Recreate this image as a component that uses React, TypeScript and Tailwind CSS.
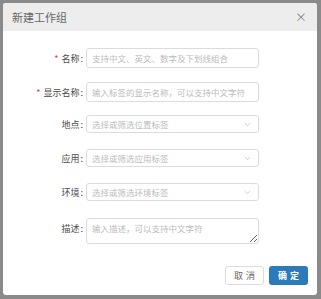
import { ChevronDown } from "lucide-react";

const font = { fontFamily: '"Noto Sans CJK SC", "Noto Sans", sans-serif' };

function Label({ text, required }: { text: string; required?: boolean }) {
  return (
    <div className="w-[83px] shrink-0 text-right pr-[3px] text-[9px] text-[#4a4a4a] leading-none">
      {required && <span className="text-[#e53935] mr-[3px]">*</span>}
      {text}<span className="ml-[1px]">:</span>
    </div>
  );
}

function TextInput({ placeholder }: { placeholder: string }) {
  return (
    <input
      placeholder={placeholder}
      className="w-[173px] h-[20px] border border-[#dcdcdc] rounded-[3px] px-[5px] text-[8.5px] text-[#333] placeholder:text-[#bbbbbb] outline-none"
    />
  );
}

function SelectBox({ placeholder }: { placeholder: string }) {
  return (
    <div className="w-[173px] h-[18px] border border-[#dcdcdc] rounded-[3px] pl-[5px] pr-[6px] flex items-center justify-between">
      <span className="text-[8.5px] text-[#bbbbbb] leading-none">{placeholder}</span>
      <ChevronDown size={9} strokeWidth={1.5} className="text-[#aaaaaa]" />
    </div>
  );
}

export default function App() {
  return (
    <div className="w-[321px] h-[299px] bg-[#8a8a8a] p-[3px]" style={font}>
      <div className="w-[314px] h-[292px] bg-white rounded-[3px] overflow-hidden flex flex-col">

        {/* Header */}
        <div className="h-[28px] bg-[#ededed] flex items-center justify-between pl-[9px] pr-[10px]">
          <span className="text-[11px] text-[#666]">新建工作组</span>
          <span className="text-[12px] text-[#888] leading-none">×</span>
        </div>

        {/* Form */}
        <div className="flex flex-col pt-[17px]">
          <div className="flex items-center">
            <Label text="名称" required />
            <TextInput placeholder="支持中文、英文、数字及下划线组合" />
          </div>

          <div className="flex items-center mt-[14px]">
            <Label text="显示名称" required />
            <TextInput placeholder="输入标签的显示名称，可以支持中文字符" />
          </div>

          <div className="flex items-center mt-[13px]">
            <Label text="地点" />
            <SelectBox placeholder="选择或筛选位置标签" />
          </div>

          <div className="flex items-center mt-[16px]">
            <Label text="应用" />
            <SelectBox placeholder="选择或筛选应用标签" />
          </div>

          <div className="flex items-center mt-[16px]">
            <Label text="环境" />
            <SelectBox placeholder="选择或筛选环境标签" />
          </div>

          <div className="flex items-start mt-[17px]">
            <div className="pt-[6px]">
              <Label text="描述" />
            </div>
            <textarea
              placeholder="输入描述，可以支持中文字符"
              className="w-[173px] h-[26px] border border-[#dcdcdc] rounded-[3px] px-[5px] py-[3px] text-[8.5px] placeholder:text-[#bbbbbb] outline-none"
            />
          </div>
        </div>

        {/* Footer */}
        <div className="flex justify-end gap-[5px] pr-[9px] mt-[22px]">
          <button className="w-[39px] h-[19px] border border-[#dcdcdc] rounded-[3px] bg-white text-[9px] text-[#666] tracking-[3px] pl-[3px]">
            取消
          </button>
          <button className="w-[39px] h-[19px] rounded-[3px] bg-[#2b7bb9] text-[9px] text-white font-bold tracking-[3px] pl-[3px]">
            确定
          </button>
        </div>

      </div>
    </div>
  );
}
